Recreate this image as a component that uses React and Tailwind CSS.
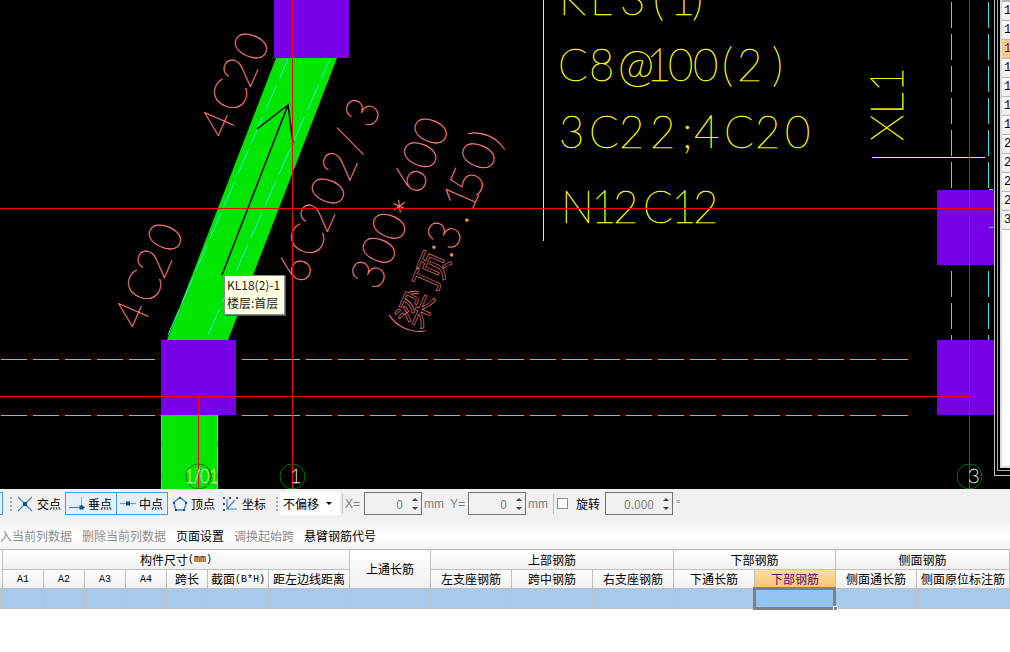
import React from 'react';

// CAD labels: one x per glyph, the drawing's stick font has its own spacing
const GLYPH_SCALE = 0.95;

const yellowLabels = [
    { text: 'KL3(1)', y: 15, xs: [559, 590, 620, 653, 670, 692] },
    { text: 'C8@100(2)', y: 81, xs: [558, 589, 618, 646, 668, 693, 722, 737, 772] },
    { text: '3C22;4C20', y: 148, xs: [559, 589, 619, 650, 682, 694, 724, 755, 785] },
    { text: 'N12C12', y: 223, xs: [561, 591, 613, 643, 671, 693] },
];

const pinkLabels = [
    { text: '4C20', x: 227, y: 141, xs: [0, 28, 56, 84] },
    { text: '4C20', x: 141, y: 332, xs: [0, 28, 56, 84] },
    { text: '6C202/3', x: 304, y: 286, xs: [0, 28, 56, 84, 112, 142, 170] },
    { text: '300*600', x: 378, y: 292, xs: [0, 26, 52, 78, 104, 130, 156], dy: '0 0 0 13 -13 0 0' },
    { text: ':3.150)', x: 417, y: 337, xs: [84, 92, 122, 133, 150, 178, 205] },
    { text: '(', x: 417, y: 337, xs: [0] },
];

const columns = [
    [274, 0, 75, 58],
    [161, 340, 75, 75],
    [937, 190, 57, 75],
    [937, 340, 57, 75],
];

const sideRows = ['1', '1', '1', '1', '1', '1', '1', '2', '2', '2', '2', '3'];

const scaledXs = (xs) => xs.map((v) => (v / GLYPH_SCALE).toFixed(1)).join(' ');

const CadDrawing = () => (
    <svg className="absolute inset-0" width="1010" height="489" viewBox="0 0 1010 489">
        {/* beams */}
        <polygon points="276,58 337,58 228,340 167,340" fill="#00e600" />
        <rect x="161" y="415" width="57" height="74" fill="#00e600" />

        {/* cyan axis dashes */}
        <g stroke="#2ee6e6" strokeWidth="1" fill="none">
            <line x1="288" y1="59" x2="168" y2="335" strokeDasharray="28 7" strokeDashoffset="7" />
            <line x1="330" y1="59" x2="208" y2="335" strokeDasharray="28 7" strokeDashoffset="7" />
            <line x1="161.5" y1="415" x2="161.5" y2="489" strokeDasharray="26 6" />
            <line x1="217.5" y1="415" x2="217.5" y2="489" strokeDasharray="26 6" />
            <line x1="1" y1="359.5" x2="155" y2="359.5" strokeDasharray="26 6" />
            <line x1="242" y1="359.5" x2="908" y2="359.5" strokeDasharray="26 6" />
            <line x1="1" y1="415.5" x2="155" y2="415.5" strokeDasharray="26 6" />
            <line x1="242" y1="415.5" x2="908" y2="415.5" strokeDasharray="26 6" />
            <line x1="951.5" y1="2" x2="951.5" y2="188" strokeDasharray="26 6" />
            <line x1="988.5" y1="2" x2="988.5" y2="188" strokeDasharray="26 6" />
            <line x1="951.5" y1="271" x2="951.5" y2="340" strokeDasharray="26 6" />
            <line x1="988.5" y1="271" x2="988.5" y2="340" strokeDasharray="26 6" />
        </g>

        {columns.map(([x, y, w, h]) => (
            <rect key={`${x}-${y}`} x={x} y={y} width={w} height={h} fill="#7700e6" />
        ))}
        <path d="M989 189.5h4M989 227.5h4" stroke="#2ee6e6" />

        {/* section arrow */}
        <path d="M222 275L288 105L257 129M288 105L293 143" stroke="#000" strokeWidth="1.5" fill="none" />

        {/* yellow annotation */}
        <path d="M543.5 0V241M872 157.5H985" stroke="#ffff00" fill="none" />
        {yellowLabels.map((l) => (
            <text
                key={l.text}
                transform={`scale(${GLYPH_SCALE} 1)`}
                x={scaledXs(l.xs)}
                y={l.y}
                fill="#ffff00"
                stroke="#ffff00"
                strokeWidth="0.5"
                className="font-['Lato'] font-thin text-[46px]"
            >
                {l.text}
            </text>
        ))}
        <text
            transform="translate(903 141) rotate(-90)"
            textLength="74"
            lengthAdjust="spacingAndGlyphs"
            fill="#ffff00"
            stroke="#ffff00"
            strokeWidth="0.5"
            className="font-['Lato'] font-thin text-[46px]"
        >
            XL1
        </text>

        {pinkLabels.map((l) => (
            <text
                key={`${l.text}-${l.x}`}
                transform={`translate(${l.x} ${l.y}) rotate(-66.5) scale(${GLYPH_SCALE} 1)`}
                x={scaledXs(l.xs)}
                dy={l.dy}
                fill="#ff8080"
                stroke="#ff8080"
                strokeWidth="0.4"
                className="font-['Lato'] font-thin text-[46px]"
            >
                {l.text}
            </text>
        ))}
        <text
            transform="translate(417 337) rotate(-66.5)"
            x="8 48"
            fill="none"
            stroke="#ff8080"
            strokeWidth="0.6"
            className="font-['Noto_Sans_CJK_SC',sans-serif] text-[36px]"
        >
            梁顶
        </text>

        {/* red cursor lines */}
        <path d="M0 208.5H994M0 396.5H969M292.5 0V489M969.5 0V489M198.5 396V489" stroke="#ff0000" fill="none" />

        {/* axis bubbles */}
        <g fill="none" stroke="#007a00">
            <circle cx="198.5" cy="476.5" r="12.5" />
            <circle cx="292.5" cy="476.5" r="12.5" />
            <circle cx="969.5" cy="476.5" r="12.5" />
        </g>
        <g fill="#ffffff" stroke="#ffffff" strokeWidth="0.4" className="font-['Lato'] font-thin text-[20px]">
            <text x="185" y="483" textLength="33" lengthAdjust="spacingAndGlyphs">1/01</text>
            <text x="290" y="483">1</text>
            <text x="968" y="483">3</text>
        </g>
    </svg>
);

const SidePanel = () => (
    <div className="absolute left-[994px] top-0 right-0 h-[476px] border-l border-b border-[#c4c4c4] bg-black">
        <div className="ml-[2px] h-[471px] border-l border-b border-[#b0b0b0] bg-black">
            <div className="ml-[2px] h-[468px] border-l-2 border-b-2 border-[#dcdcdc] bg-white overflow-hidden">
                <div className="h-[2px] bg-[#b4b4b4]" />
                {sideRows.map((n, i) => (
                    <div
                        key={i}
                        className={`h-[19px] border-b border-[#b4b4b4] pl-[2px] text-[12px] leading-[18px] font-['Liberation_Mono',monospace] ${i === 2 ? 'bg-[#f8cb8c] text-[#5c0a6e]' : 'bg-gradient-to-b from-white to-[#eeeeee] text-black'}`}
                    >
                        {n}
                    </div>
                ))}
            </div>
        </div>
    </div>
);

const CrossIcon = () => (
    <svg width="16" height="16" viewBox="0 0 16 16">
        <path d="M1 1L15 15M15 1L1 15" stroke="#3f83c8" strokeWidth="1.2" />
        <rect x="6" y="6" width="4" height="4" fill="#14508f" />
    </svg>
);

const PerpIcon = () => (
    <svg width="18" height="16" viewBox="0 0 18 16">
        <path d="M1 11.5H17" stroke="#3f83c8" strokeWidth="1.2" />
        <path d="M13.5 1V11" stroke="#7aa8d8" />
        <rect x="11.5" y="9.5" width="4" height="4" fill="#14508f" />
    </svg>
);

const MidIcon = () => (
    <svg width="18" height="16" viewBox="0 0 18 16">
        <path d="M1 7.5H17" stroke="#6a9ed4" strokeWidth="1.2" />
        <rect x="7" y="5.5" width="4" height="4" fill="#14508f" />
    </svg>
);

const VertexIcon = () => (
    <svg width="16" height="16" viewBox="0 0 16 16">
        <polygon points="8,1.5 14.5,6.5 12,14 4,14 1.5,6.5" fill="none" stroke="#3f83c8" strokeWidth="1.4" />
        <path d="M7 1h2v2H7zM1 6h2v2H1zM13 6h2v2h-2zM3 13h2v2H3zM11 13h2v2h-2z" fill="#14508f" />
    </svg>
);

const CoordIcon = () => (
    <svg width="17" height="16" viewBox="0 0 17 16">
        <path d="M5 3V13H15M5 13L13 4" stroke="#3f83c8" strokeWidth="1.2" fill="none" />
        <path d="M1 1h2v2H1zM1 7h2v2H1zM1 13h2v2H1zM7 1h2v2H7zM14 1h2v2h-2z" fill="#555" />
    </svg>
);

const Grip = ({ className }) => (
    <div className={`flex flex-col gap-[2px] w-[3px] ${className}`}>
        {[0, 1, 2, 3].map((i) => (
            <span key={i} className="block w-[2px] h-[2px] bg-[#a8a8a8]" />
        ))}
    </div>
);

const Spinner = () => (
    <div className="flex flex-col items-center gap-[6px] w-[9px]">
        <span className="block w-0 h-0 border-x-[3px] border-x-transparent border-b-[3px] border-b-[#444]" />
        <span className="block w-0 h-0 border-x-[3px] border-x-transparent border-t-[3px] border-t-[#444]" />
    </div>
);

const NumberInput = ({ value, className }) => (
    <div className={`flex items-center justify-end h-[23px] bg-[#f0f0f0] border border-[#707070] pr-[2px] ${className}`}>
        <span className="text-[#808080] mr-[7px]">{value}</span>
        <Spinner />
    </div>
);

const Toolbar = () => (
    <div className="flex items-center h-[34px] pb-[5px] bg-[#f0f0f0] text-[12px] text-black whitespace-nowrap">
        <div className="w-[3px] h-[23px] bg-[#e4effa] border-y border-r border-[#4a9be8]" />
        <Grip className="ml-[7px]" />
        <div className="flex items-center gap-[4px] ml-[4px] w-[48px]">
            <CrossIcon />
            <span>交点</span>
        </div>
        <div className="flex items-center gap-[2px] h-[23px] w-[52px] pl-[2px] bg-[#e4effa] border border-[#4a9be8]">
            <PerpIcon />
            <span>垂点</span>
        </div>
        <div className="flex items-center gap-[2px] -ml-px h-[23px] w-[52px] pl-[2px] bg-[#e4effa] border border-[#4a9be8]">
            <MidIcon />
            <span>中点</span>
        </div>
        <div className="flex items-center gap-[3px] ml-[4px] w-[46px]">
            <VertexIcon />
            <span>顶点</span>
        </div>
        <div className="flex items-center gap-[3px] ml-[4px] w-[44px]">
            <CoordIcon />
            <span>坐标</span>
        </div>
        <Grip className="ml-[10px]" />
        <div className="flex items-center justify-between ml-[1px] w-[60px] h-[23px] bg-white pl-[3px] pr-[8px]">
            <span>不偏移</span>
            <span className="block w-0 h-0 border-x-[3px] border-x-transparent border-t-[3px] border-t-black" />
        </div>
        <div className="ml-[2px] w-px h-[20px] bg-[#c0c0c0]" />
        <span className="ml-[2px] w-[19px] text-[#808080] font-['Liberation_Sans']">X=</span>
        <NumberInput value="0" className="w-[58px]" />
        <span className="ml-[2px] w-[26px] text-[#808080] font-['Liberation_Sans']">mm</span>
        <span className="w-[18px] text-[#808080] font-['Liberation_Sans']">Y=</span>
        <NumberInput value="0" className="w-[58px]" />
        <span className="ml-[2px] w-[25px] text-[#808080] font-['Liberation_Sans']">mm</span>
        <div className="w-px h-[20px] bg-[#c0c0c0]" />
        <div className="ml-[3px] w-[11px] h-[11px] bg-white border border-[#909090]" />
        <span className="ml-[8px] w-[29px]">旋转</span>
        <NumberInput value="0.000" className="w-[68px]" />
        <span className="ml-[3px] text-[#808080]">°</span>
    </div>
);

const CommandBar = () => (
    <div className="flex items-center gap-[10px] h-[26px] -ml-[12px] bg-gradient-to-b from-[#f4f4f4] via-white to-[#f2f2f2] text-[12px]">
        <span className="text-[#8c8c8c]">插入当前列数据</span>
        <span className="text-[#8c8c8c]">删除当前列数据</span>
        <span className="text-black">页面设置</span>
        <span className="text-[#8c8c8c]">调换起始跨</span>
        <span className="text-black">悬臂钢筋代号</span>
    </div>
);

const head = 'flex items-center justify-center overflow-hidden whitespace-nowrap border-r border-b border-[#c0c0c0] bg-gradient-to-b from-white to-[#f0f0f0]';
const rowCell = 'border-r border-b border-[#c0c0c0] bg-[#a6c9ee]';
const mono = "font-['Liberation_Mono',monospace] text-[10px]";

const BeamTable = () => (
    <div className="grid grid-cols-[3px_repeat(5,41px)_61px_repeat(8,81px)_93px] grid-rows-[20px_19px_20px] border-t border-[#b8b8b8] text-[12px] text-black">
        <div className={`${head} row-span-2`} />
        <div className={`${head} col-span-7`}>构件尺寸<span className={mono}>(mm)</span></div>
        <div className={`${head} row-span-2`}>上通长筋</div>
        <div className={`${head} col-span-3`}>上部钢筋</div>
        <div className={`${head} col-span-2`}>下部钢筋</div>
        <div className={`${head} col-span-2`}>侧面钢筋</div>

        {['A1', 'A2', 'A3', 'A4'].map((t) => (
            <div key={t} className={`${head} ${mono}`}>{t}</div>
        ))}
        <div className={head}>跨长</div>
        <div className={head}>截面<span className={mono}>(B*H)</span></div>
        <div className={head}>距左边线距离</div>
        <div className={head}>左支座钢筋</div>
        <div className={head}>跨中钢筋</div>
        <div className={head}>右支座钢筋</div>
        <div className={head}>下通长筋</div>
        <div className="flex items-center justify-center border-r border-b border-[#c0c0c0] bg-gradient-to-b from-[#fbdd9f] to-[#f6c56f] text-[#5c0a6e]">下部钢筋</div>
        <div className={head}>侧面通长筋</div>
        <div className={head}>侧面原位标注筋</div>

        {Array.from({ length: 13 }, (_, i) => (
            <div key={i} className={rowCell} />
        ))}
        <div className="relative border-r border-b border-[#c0c0c0] bg-[#94c4f4]">
            <div className="absolute -left-[2px] -top-[2px] -right-px -bottom-[2px] border-[3px] border-[#808080]" />
            <div className="absolute -right-[3px] -bottom-[3px] w-[5px] h-[5px] bg-[#808080] border border-white" />
        </div>
        <div className={rowCell} />
        <div className={rowCell} />
    </div>
);

const App = () => {
    return (
        <div className="w-[1010px] h-[652px] overflow-hidden bg-white font-['Noto_Sans_CJK_SC',sans-serif]">
            <div className="relative h-[489px] bg-black overflow-hidden">
                <CadDrawing />
                <SidePanel />
                {/* hover tooltip */}
                <div className="absolute left-[224px] top-[275px] w-[61px] h-[40px] px-[2px] bg-[#ffffe1] border border-[#8a8a8a] shadow-[1px_1px_0_#555] text-[12px] leading-[18px] text-[#222]">
                    <div>KL18(2)-1</div>
                    <div>楼层:首层</div>
                </div>
            </div>
            <Toolbar />
            <CommandBar />
            <BeamTable />
        </div>
    );
};

export default App;
